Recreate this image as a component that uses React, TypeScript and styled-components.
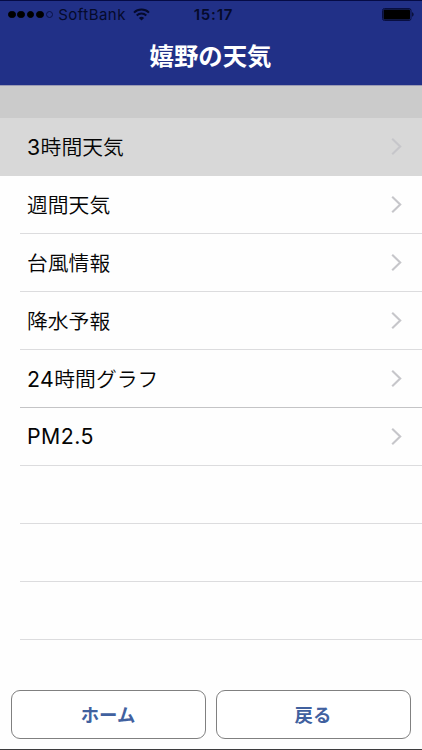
import React from "react";
import styled, { createGlobalStyle } from "styled-components";

const GlobalStyle = createGlobalStyle`
  *, *::before, *::after { box-sizing: border-box; }
  body { margin: 0; background: #fff; }
`;

const Screen = styled.div`
  width: 422px;
  height: 750px;
  display: flex;
  flex-direction: column;
  overflow: hidden;
  background: #fefefe;
  border-bottom: 1px solid #3c3c3e;
  font-family: Inter, "Noto Sans CJK JP", sans-serif;
`;

const Header = styled.header`
  height: 86px;
  flex: none;
  background: #213087;
  border-top: 1px solid #050b45;
  border-bottom: 1px solid #9b9bb4;
`;

const StatusBar = styled.div`
  height: 27px;
  display: grid;
  grid-template-columns: 1fr auto 1fr;
  align-items: center;
  padding: 0 8px 0 8px;
  color: #050a2b;
  font-size: 15px;
  line-height: 27px;
`;

const Carrier = styled.div`
  display: flex;
  align-items: center;
`;

const Signal = styled.div`
  display: flex;
  gap: 1.8px;
  margin-right: 5px;
`;

const Dot = styled.span<{ $empty?: boolean }>`
  width: 7.6px;
  height: 7.6px;
  border-radius: 50%;
  border: 1px solid ${(p) => (p.$empty ? "#0a1248" : "#000")};
  background: ${(p) => (p.$empty ? "transparent" : "#000")};
`;

const CarrierName = styled.span`
  width: 67px;
  margin-right: 8px;
  letter-spacing: 0.48px;
  white-space: nowrap;
`;

const Clock = styled.span`
  padding-left: 5px;
  font-weight: 600;
  letter-spacing: 0.8px;
`;

const BatterySlot = styled.div`
  display: flex;
  justify-content: flex-end;
`;

const Title = styled.h1`
  margin: 0;
  height: 57px;
  color: #fff;
  font-size: 24.4px;
  font-weight: 700;
  line-height: 56px;
  text-align: center;
  text-indent: -1px;
`;

const SectionGap = styled.div`
  height: 32px;
  flex: none;
  background: #cbcbcb;
`;

const List = styled.ul`
  list-style: none;
  margin: 0;
  padding: 0;
  flex: 1;
`;

const Row = styled.li<{ $selected?: boolean }>`
  height: 58px;
  padding-left: 20px;
  background: ${(p) => (p.$selected ? "#d8d8d8" : "transparent")};
`;

const RowBody = styled.div<{ $line: string }>`
  height: 58px;
  display: flex;
  align-items: center;
  justify-content: space-between;
  padding: 0 20px 0 7px;
  border-bottom: 1px solid ${(p) => p.$line};
  color: #050505;
  font-size: 20.8px;
`;

const Label = styled.span<{ $japanese: boolean }>`
  padding-bottom: 2px;
  font-weight: ${(p) => (p.$japanese ? 350 : 400)};
`;

const Latin = styled.span`
  font-weight: 400;
  font-size: 21.3px;
  letter-spacing: 0.45px;
`;

const Footer = styled.footer`
  display: grid;
  grid-template-columns: 1fr 1fr;
  gap: 10px;
  padding: 0 11px 10px;
`;

const FooterButton = styled.button`
  height: 49px;
  padding: 0 1px 2px 0;
  border: 1px solid #808080;
  border-radius: 9px;
  background: #fff;
  color: #41619f;
  font-family: inherit;
  font-size: 18.4px;
  font-weight: 700;
`;

const WifiIcon = () => (
  <svg width="17" height="13" viewBox="0 0 17 13" fill="none" stroke="#050a2b" strokeWidth="2">
    <path d="M1 4.6a10.8 10.8 0 0 1 15 0" />
    <path d="M3.7 7.5a6.9 6.9 0 0 1 9.6 0" />
    <path d="M8.5 12.6 5.9 9.9a3.8 3.8 0 0 1 5.2 0z" fill="#050a2b" stroke="none" />
  </svg>
);

const BatteryIcon = () => (
  <svg width="32" height="13" viewBox="0 0 32 13">
    <rect x="0.5" y="0.5" width="28.5" height="12" rx="2" fill="#213087" stroke="#080e40" />
    <rect x="1.5" y="1.5" width="26.5" height="10" rx="1" fill="#000" />
    <path d="M30.2 4.3c1.8.6 1.8 3.8 0 4.4z" fill="#050a2b" />
  </svg>
);

const Chevron = () => (
  <svg width="11" height="18" viewBox="0 0 11 18" fill="none" stroke="#c6c6ca" strokeWidth="2.1">
    <path d="M1.2 .8 9.2 8.5l-8 7.7" />
  </svg>
);

const items = [
  { latin: "3", text: "時間天気", selected: true, line: "#d8d8d8" },
  { text: "週間天気", line: "#dcdcde" },
  { text: "台風情報", line: "#dcdcde" },
  { text: "降水予報", line: "#dcdcde" },
  { latin: "24", text: "時間グラフ", line: "#c4c4c6" },
  { latin: "PM2.5", line: "#dcdcde" },
  { line: "#dcdcde" },
  { line: "#dcdcde" },
  { line: "#dcdcde" },
];

export default function App() {
  return (
    <Screen>
      <GlobalStyle />
      <Header>
        <StatusBar>
          <Carrier>
            <Signal>
              <Dot /><Dot /><Dot /><Dot /><Dot $empty />
            </Signal>
            <CarrierName>SoftBank</CarrierName>
            <WifiIcon />
          </Carrier>
          <Clock>15:17</Clock>
          <BatterySlot><BatteryIcon /></BatterySlot>
        </StatusBar>
        <Title>嬉野の天気</Title>
      </Header>
      <SectionGap />
      <List>
        {items.map((item, i) => (
          <Row key={i} $selected={item.selected}>
            <RowBody $line={item.line}>
              {(item.latin || item.text) && (
                <>
                  <Label $japanese={Boolean(item.text)}>
                    {item.latin && <Latin>{item.latin}</Latin>}
                    {item.text}
                  </Label>
                  <Chevron />
                </>
              )}
            </RowBody>
          </Row>
        ))}
      </List>
      <Footer>
        <FooterButton>ホーム</FooterButton>
        <FooterButton>戻る</FooterButton>
      </Footer>
    </Screen>
  );
}
